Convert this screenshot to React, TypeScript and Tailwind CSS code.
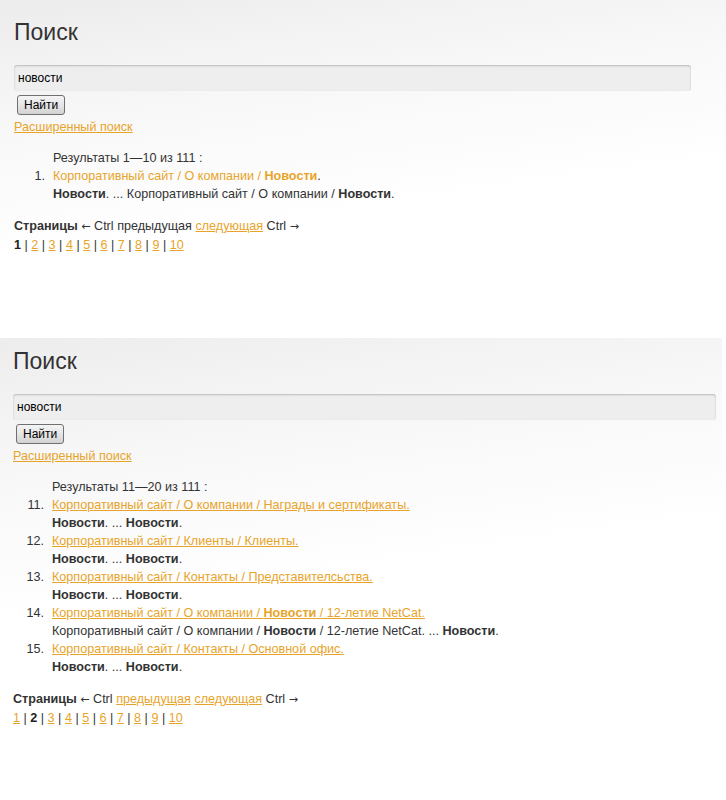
import { Fragment, ReactNode } from 'react';

type Part = string | { b: string };

type Result = {
  n: number;
  title: Part[];
  desc: Part[];
};

const renderParts = (parts: Part[]) =>
  parts.map((p, i) =>
    typeof p === 'string' ? <Fragment key={i}>{p}</Fragment> : <b key={i} className="font-bold">{p.b}</b>
  );

const firstPage: Result[] = [
  {
    n: 1,
    title: ['Корпоративный сайт / О компании / ', { b: 'Новости' }],
    desc: [{ b: 'Новости' }, '. ... Корпоративный сайт / О компании / ', { b: 'Новости' }, '.'],
  },
];

const secondPage: Result[] = [
  {
    n: 11,
    title: ['Корпоративный сайт / О компании / Награды и сертификаты.'],
    desc: [{ b: 'Новости' }, '. ... ', { b: 'Новости' }, '.'],
  },
  {
    n: 12,
    title: ['Корпоративный сайт / Клиенты / Клиенты.'],
    desc: [{ b: 'Новости' }, '. ... ', { b: 'Новости' }, '.'],
  },
  {
    n: 13,
    title: ['Корпоративный сайт / Контакты / Представителсьства.'],
    desc: [{ b: 'Новости' }, '. ... ', { b: 'Новости' }, '.'],
  },
  {
    n: 14,
    title: ['Корпоративный сайт / О компании / ', { b: 'Новости' }, ' / 12-летие NetCat.'],
    desc: [
      'Корпоративный сайт / О компании / ',
      { b: 'Новости' },
      ' / 12-летие NetCat. ... ',
      { b: 'Новости' },
      '.',
    ],
  },
  {
    n: 15,
    title: ['Корпоративный сайт / Контакты / Основной офис.'],
    desc: [{ b: 'Новости' }, '. ... ', { b: 'Новости' }, '.'],
  },
];

const Link = ({ children, plain }: { children: ReactNode; plain?: boolean }) => (
  <a href="#" className={`text-[#e8a42a] ${plain ? 'no-underline' : 'underline'}`}>
    {children}
  </a>
);

const Arrow = ({ children }: { children: string }) => (
  <span className="font-['DejaVu_Sans',sans-serif] text-[11px]">{children}</span>
);

const SearchPanel = ({
  top,
  inputWidth,
  indent,
  current,
  range,
  results,
  firstStyle,
}: {
  top: string;
  inputWidth: string;
  indent: string;
  current: number;
  range: string;
  results: Result[];
  firstStyle?: boolean;
}) => (
  <div className={`${top} ${indent}`}>
    <h1 className="text-[23px] leading-[28px] text-[#333]">Поиск</h1>

    <form className="mt-[19px]" onSubmit={(e) => e.preventDefault()}>
      <input
        defaultValue="новости"
        className={`${inputWidth} block h-[26px] rounded-[3px] bg-[#eeeeee] pl-[4px] text-[12px] text-black shadow-[inset_0_1px_2px_rgba(0,0,0,0.22)] outline-none`}
      />
      <button
        type="submit"
        className="mt-[4px] ml-[3px] block h-[20px] rounded-[3px] border border-[#707070] bg-gradient-to-b from-[#f4f4f4] via-[#e6e6e6] to-[#d2d2d2] px-[6px] text-[12px] leading-[18px] text-black"
      >
        Найти
      </button>
    </form>

    <div className="mt-[3px]">
      <Link>Расширенный поиск</Link>
    </div>

    <div className="mt-[13px]">
      <div className="pl-[39px]">Результаты {range} из 111 :</div>
      <ol>
        {results.map((r) => (
          <li key={r.n} className="flex">
            <span className="w-[39px] shrink-0 pr-[8px] text-right">{r.n}.</span>
            <div>
              <div>
                {firstStyle ? (
                  <>
                    <Link plain>{renderParts(r.title)}</Link>.
                  </>
                ) : (
                  <Link>{renderParts(r.title)}</Link>
                )}
              </div>
              <div>{renderParts(r.desc)}</div>
            </div>
          </li>
        ))}
      </ol>
    </div>

    <div className="mt-[14px]">
      <div>
        <b className="font-bold">Страницы</b> <Arrow>←</Arrow> Ctrl{' '}
        {current === 1 ? 'предыдущая' : <Link>предыдущая</Link>} <Link>следующая</Link> Ctrl <Arrow>→</Arrow>
      </div>
      <div>
        {Array.from({ length: 10 }, (_, i) => i + 1).map((p) => (
          <Fragment key={p}>
            {p > 1 && ' | '}
            {p === current ? <b className="font-bold text-[#222]">{p}</b> : <Link>{p}</Link>}
          </Fragment>
        ))}
      </div>
    </div>
  </div>
);

export default function App() {
  return (
    <div className="min-h-[800px] bg-white font-['Liberation_Sans',Arial,sans-serif] text-[12.6px] leading-[18px] text-[#333]">
      <div className="h-[338px] bg-[linear-gradient(172deg,#ececec_0px,#f7f7f7_120px,#ffffff_260px)] pr-[35px]">
        <SearchPanel
          top="pt-[18px]"
          indent="pl-[14px]"
          inputWidth="w-[677px]"
          current={1}
          range="1—10"
          results={firstPage}
          firstStyle
        />
      </div>
      <div className="h-[462px] w-[722px] bg-[linear-gradient(172deg,#ededed_0px,#f7f7f7_130px,#ffffff_280px)]">
        <SearchPanel
          top="pt-[9px]"
          indent="pl-[13px]"
          inputWidth="w-[703px]"
          current={2}
          range="11—20"
          results={secondPage}
        />
      </div>
    </div>
  );
}
